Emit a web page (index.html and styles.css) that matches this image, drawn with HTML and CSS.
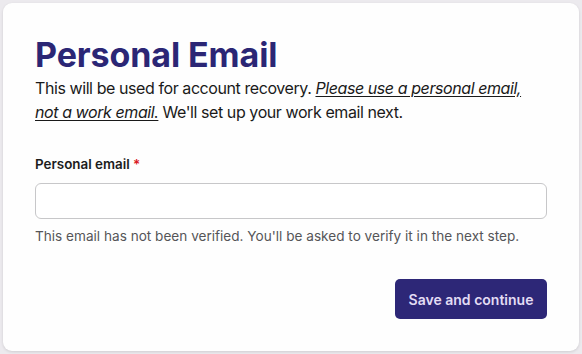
FILE: index.html
```html
<!DOCTYPE html>
<html lang="en">
<head>
<meta charset="utf-8">
<title>Personal Email</title>
<link rel="stylesheet" href="styles.css">
</head>
<body>
<div class="backdrop">
  <div class="modal">
    <h1 class="title">Personal Email</h1>
    <p class="intro">This will be used for account recovery. <em class="emph">Please use a personal email, not a work email.</em> We'll set up your work email next.</p>
    <div class="field">
      <label class="label" for="email">Personal email <span class="req">*</span></label>
      <input class="input" id="email" type="email">
      <p class="help">This email has not been verified. You'll be asked to verify it in the next step.</p>
    </div>
    <div class="actions">
      <button class="btn" type="button">Save and continue</button>
    </div>
  </div>
</div>
</body>
</html>
```
FILE: styles.css
```css
* { box-sizing: border-box; }
html, body { margin: 0; padding: 0; }
body {
  width: 582px;
  height: 354px;
  background: #eceaee;
  font-family: Inter, "Noto Sans", sans-serif;
  overflow: hidden;
}
.backdrop {
  padding: 3px 3px 3px 3px;
  height: 354px;
}
.modal {
  width: 576px;
  height: 348px;
  background: #fefefe;
  border-radius: 9px;
  box-shadow: 0 1px 3px rgba(0,0,0,0.12);
  padding: 31px 32px 32px 32px;
  display: flex;
  flex-direction: column;
}
.title {
  margin: 0;
  font-size: 34px;
  line-height: 42px;
  font-weight: 700;
  color: #2b2675;
  letter-spacing: -0.1px;
}
.intro {
  margin: 0;
  font-size: 16px;
  line-height: 24px;
  color: #1a1a1a;
  letter-spacing: -0.42px;
}
.emph {
  font-style: italic;
  text-decoration: underline;
  text-underline-offset: 2px;
}
.field {
  margin-top: 30px;
  display: flex;
  flex-direction: column;
}
.label {
  font-size: 13.4px;
  line-height: 20px;
  font-weight: 600;
  color: #1c1c1c;
}
.req { color: #d9141b; }
.input {
  margin-top: 9px;
  width: 512px;
  height: 36px;
  border: 1px solid #c7c7c9;
  border-radius: 6px;
  background: #fff;
  font: inherit;
}
.help {
  margin: 8px 0 0 0;
  font-size: 13.6px;
  line-height: 18px;
  color: #555558;
}
.actions {
  margin-top: auto;
  display: flex;
  justify-content: flex-end;
}
.btn {
  height: 40px;
  width: 152px;
  border: none;
  border-radius: 5px;
  background: #2d2777;
  color: #e2dcf4;
  font-family: Inter, "Noto Sans", sans-serif;
  font-size: 14px;
  font-weight: 600;
  padding: 0;
}
```
